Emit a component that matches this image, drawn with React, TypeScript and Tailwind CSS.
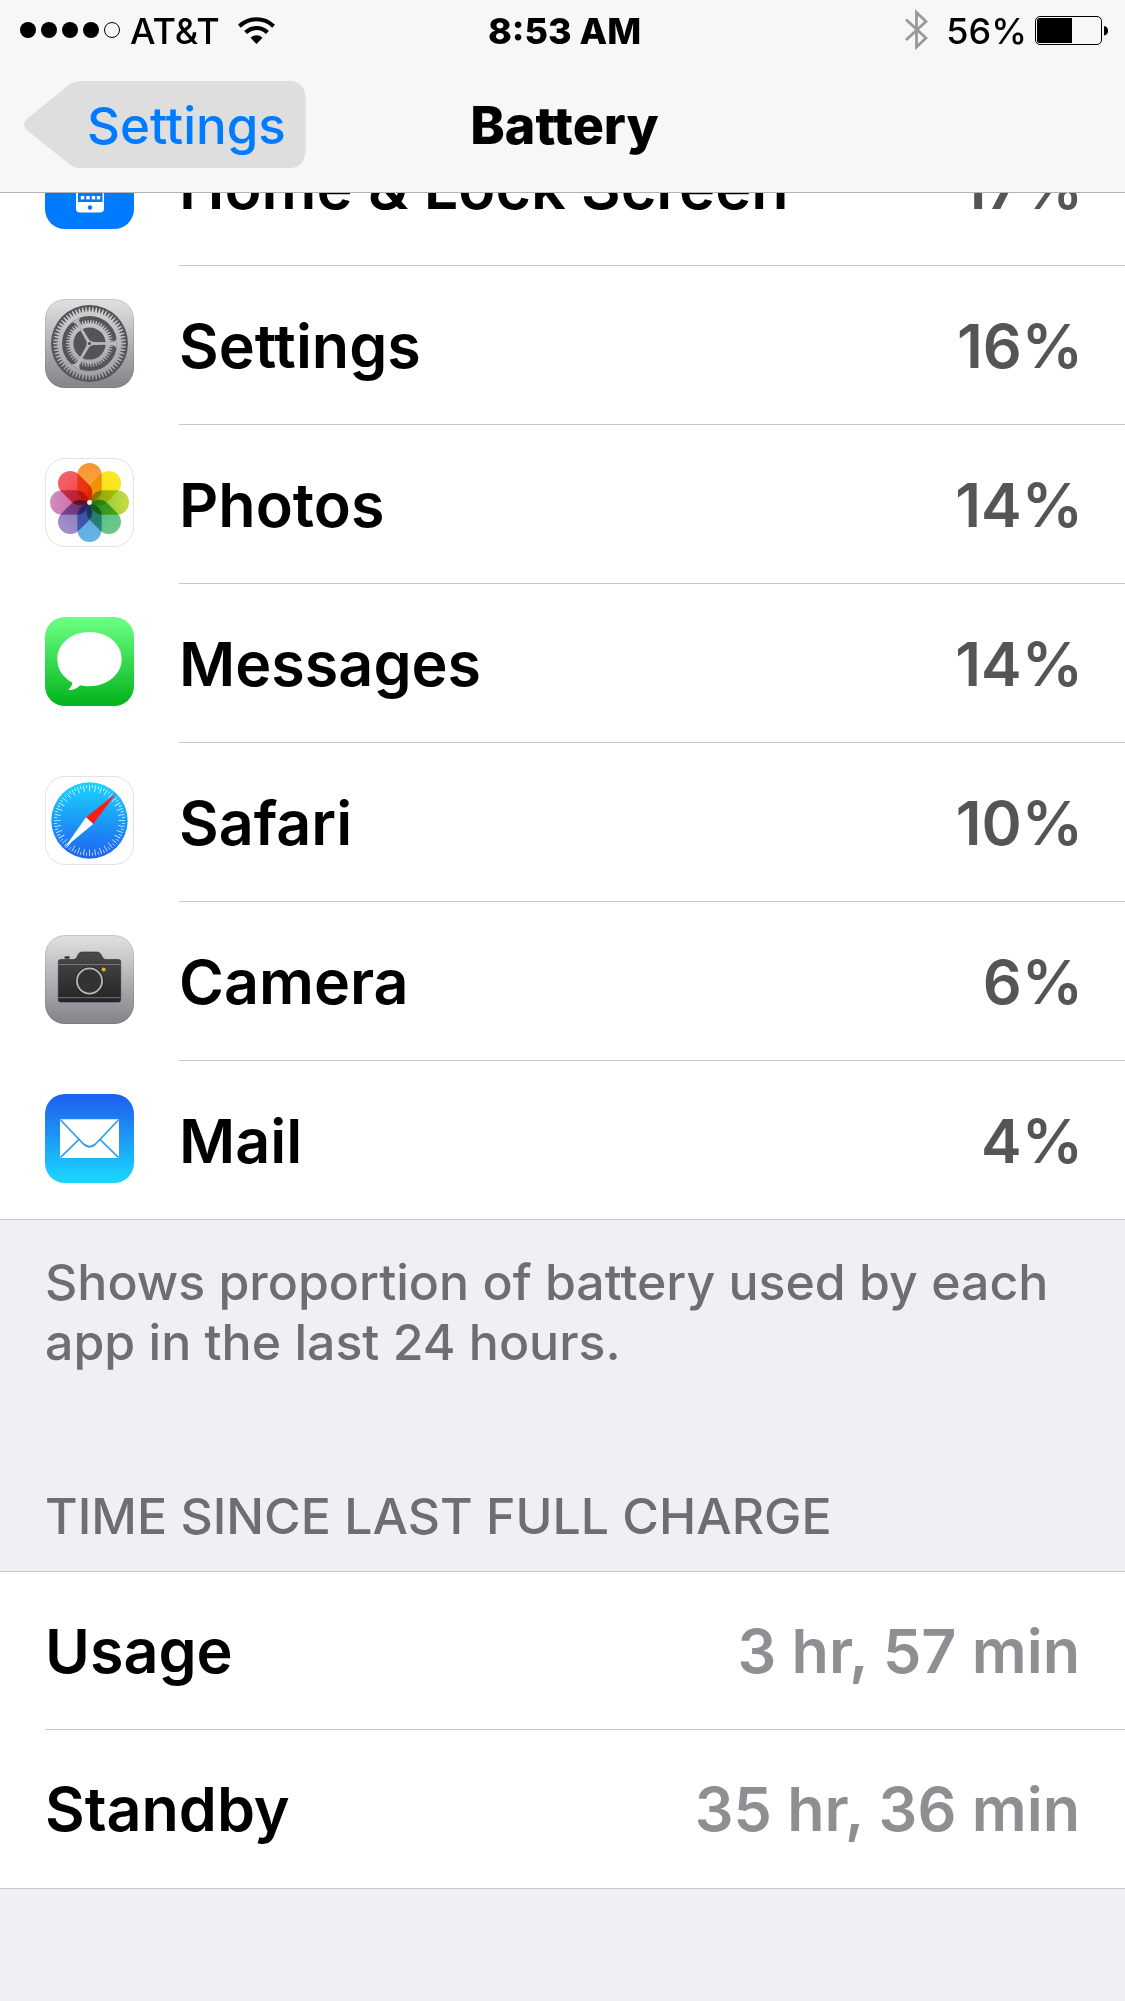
import type { ReactNode } from "react";

const ICON = "block h-[89px] w-[89px] shrink-0";

function Tile({ id, from, to, edge, children }: { id: string; from: string; to: string; edge?: string; children: ReactNode }) {
  return (
    <svg viewBox="0 0 89 89" className={ICON} aria-hidden="true">
      <defs>
        <linearGradient id={id} x1="0" y1="0" x2="0" y2="1">
          <stop offset="0.05" stopColor={from} />
          <stop offset="0.95" stopColor={to} />
        </linearGradient>
      </defs>
      <rect width="89" height="89" rx="20" fill={`url(#${id})`} />
      {edge && <rect x="0.5" y="0.5" width="88" height="88" rx="19.5" fill="none" stroke={edge} />}
      {children}
    </svg>
  );
}

function HomeIcon() {
  return (
    <Tile id="home-bg" from="#007aff" to="#007aff">
      <rect x="31" y="16" width="28" height="56.5" rx="4" fill="#fff" />
      <rect x="33" y="24" width="24.5" height="38" fill="#007aff" />
      {[30, 38, 46, 56].map((y) =>
        [36, 41.5, 47, 52].map((x) => <rect key={`${x}-${y}`} x={x - 0.2} y={y} width="3.4" height="3.4" fill="#fff" />)
      )}
      <circle cx="45" cy="67.5" r="2.2" fill="#007aff" />
    </Tile>
  );
}

function polar(radius: number, degrees: number) {
  const a = (degrees * Math.PI) / 180;
  return `${(44.5 + radius * Math.cos(a)).toFixed(2)} ${(44.5 + radius * Math.sin(a)).toFixed(2)}`;
}

function teeth(count: number, base: number, tip: number) {
  const step = 360 / count;
  return Array.from({ length: count }, (_, i) => {
    const a = i * step;
    return `M${polar(base, a - step * 0.42)}L${polar(tip, a - step * 0.14)} ${polar(tip, a + step * 0.14)} ${polar(base, a + step * 0.42)}Z`;
  }).join("");
}

const OUTER_TEETH = teeth(64, 31.3, 36.5);
const INNER_TEETH = teeth(50, 19.5, 23.6);

function SettingsIcon() {
  return (
    <Tile id="settings-bg" from="#dcddde" to="#86888e" edge="#00000018">
      <defs>
        <linearGradient id="gear-metal" gradientUnits="userSpaceOnUse" x1="0" y1="6" x2="0" y2="83">
          <stop offset="0" stopColor="#d3d4d6" />
          <stop offset="1" stopColor="#9b9da1" />
        </linearGradient>
      </defs>
      <circle cx="44.5" cy="44.5" r="38.5" fill="#555557" />
      <path d={OUTER_TEETH} fill="url(#gear-metal)" />
      <path d={INNER_TEETH} fill="url(#gear-metal)" />
      <g fill="none" stroke="url(#gear-metal)">
        <circle cx="44.5" cy="44.5" r="29.6" strokeWidth="4.2" />
        <circle cx="44.5" cy="44.5" r="18" strokeWidth="3.8" />
      </g>
      {[0, 120, 240].map((a) => (
        <path
          key={a}
          d="M44.5 42 48.500 43 62 43.200 67.500 42.800Q70.500 42 71.800 39.500V49.500Q70.500 47 67.500 46.200L62 45.800 48.500 46 44.500 47Z"
          fill="#b8b9bc"
          transform={`rotate(${a} 44.5 44.5)`}
        />
      ))}
      <circle cx="44.5" cy="44.5" r="2.8" fill="#b8b9bc" />
      <circle cx="44.5" cy="44.5" r="1.5" fill="#444446" />
    </Tile>
  );
}

const PETALS = [
  ["#f7923a", "#fcb52c"],
  ["#fbe920", "#f0dc1e"],
  ["#c6dc42", "#86bf3c"],
  ["#70c88c", "#4fb97f"],
  ["#62b6ea", "#6ba0d6"],
  ["#a48fcb", "#8376ba"],
  ["#d38bc0", "#c6679c"],
  ["#f3646c", "#ee3f3c"],
];

function PhotosIcon() {
  return (
    <Tile id="photos-bg" from="#ffffff" to="#ffffff" edge="#e2e2e2">
      <g className="isolate">
        {PETALS.map(([outer, inner], i) => (
          <g key={i} transform={`rotate(${i * 45} 44.5 44.5)`} className="mix-blend-multiply">
            <linearGradient id={`petal-${i}`} x1="0" y1="0" x2="0" y2="1">
              <stop offset="0" stopColor={outer} />
              <stop offset="1" stopColor={inner} />
            </linearGradient>
            <rect x="32.3" y="5" width="24.4" height="38.5" rx="12.2" fill={`url(#petal-${i})`} />
          </g>
        ))}
      </g>
      <circle cx="44.5" cy="44.5" r="2.4" fill="#fff" />
    </Tile>
  );
}

function MessagesIcon() {
  return (
    <Tile id="messages-bg" from="#68fd80" to="#07b71f">
      <path
        d="M44.5 15C62.500 15 76.700 26.800 76.700 42S62.500 69.200 44.500 69.200C41.300 69.200 38.500 69 35.500 68.200 32.500 71 27.500 73.500 23.300 73 25.500 71 27.200 68.500 27.400 65.600 18.200 60.800 12.300 52.500 12.300 42 12.300 26.800 26.500 15 44.500 15Z"
        fill="#fff"
      />
    </Tile>
  );
}

function SafariIcon() {
  return (
    <Tile id="safari-bg" from="#ffffff" to="#ffffff" edge="#e2e2e2">
      <defs>
        <linearGradient id="safari-dial" x1="0" y1="0" x2="0" y2="1">
          <stop offset="0" stopColor="#1bd3fd" />
          <stop offset="1" stopColor="#1d62f0" />
        </linearGradient>
      </defs>
      <circle cx="44.5" cy="44.5" r="38.2" fill="url(#safari-dial)" />
      {Array.from({ length: 72 }, (_, i) => (
        <line
          key={i}
          x1="44.5"
          x2="44.5"
          y1="9"
          y2={i % 2 ? 12 : 15.5}
          stroke="#fff"
          strokeOpacity="0.75"
          strokeWidth="0.9"
          transform={`rotate(${i * 5} 44.5 44.5)`}
        />
      ))}
      <path d="M71.300 17.300 41 41.200 48.200 48Z" fill="#fe1b17" />
      <path d="M19.300 72 41 41.200 48.200 48Z" fill="#fff" />
    </Tile>
  );
}

function CameraIcon() {
  return (
    <Tile id="camera-bg" from="#dcddde" to="#86888e" edge="#00000018">
      <defs>
        <linearGradient id="camera-body" x1="0" y1="0" x2="0" y2="1">
          <stop offset="0" stopColor="#4a4a4a" />
          <stop offset="1" stopColor="#242424" />
        </linearGradient>
      </defs>
      <rect x="19.500" y="21.300" width="5.200" height="2.500" rx="1" fill="#333" />
      <path
        d="M15.500 24.500H28C34 24.500 31 17 37.500 17H51.500C58 17 55.500 24.500 61.500 24.500H73.500Q75.700 24.500 75.700 26.700V65Q75.700 67 73.700 67H15.300Q13.300 67 13.300 65V26.700Q13.300 24.500 15.500 24.500Z"
        fill="url(#camera-body)"
        stroke="#2a2a2a"
        strokeWidth="0.600"
      />
      <path d="M13.300 29.500H75.700M13.300 62.700H75.700" stroke="#858585" strokeWidth="0.800" />
      <circle cx="44.500" cy="46" r="14.500" fill="#252525" />
      <circle cx="44.500" cy="46" r="12.600" fill="#333" stroke="#b9babd" strokeWidth="1.800" />
      <circle cx="58.700" cy="34.500" r="1.900" fill="#f3b21c" />
    </Tile>
  );
}

function MailIcon() {
  return (
    <Tile id="mail-bg" from="#1d62f0" to="#1bd3fd">
      <rect x="15" y="25.300" width="59" height="38.700" rx="1" fill="#fff" />
      <g fill="none" stroke="#2a9df8" strokeWidth="1.700">
        <path d="M15.500 26 38.500 50Q44.500 55.500 50.500 50L73.500 26" />
        <path d="M15.500 63.500 34 45.300M73.500 63.500 55 45.300" />
      </g>
    </Tile>
  );
}

const APPS = [
  { name: "Home & Lock Screen", value: "17%", Icon: HomeIcon },
  { name: "Settings", value: "16%", Icon: SettingsIcon },
  { name: "Photos", value: "14%", Icon: PhotosIcon },
  { name: "Messages", value: "14%", Icon: MessagesIcon },
  { name: "Safari", value: "10%", Icon: SafariIcon },
  { name: "Camera", value: "6%", Icon: CameraIcon },
  { name: "Mail", value: "4%", Icon: MailIcon },
];

const TIMES = [
  { name: "Usage", value: "3 hr, 57 min" },
  { name: "Standby", value: "35 hr, 36 min" },
];

function StatusBar() {
  return (
    <div className="grid h-[60px] grid-cols-3 items-center pr-[16px] pl-[20px] text-[36px] leading-[42px]">
      <div className="flex items-center">
        <svg viewBox="0 0 100 16" className="h-[16px] w-[100px]" role="img" aria-label="Signal strength">
          {[8, 29, 50, 71].map((x) => (
            <circle key={x} cx={x} cy="8" r="8" />
          ))}
          <circle cx="92" cy="8" r="7.500" fill="none" stroke="#000" />
        </svg>
        <span className="ml-[10px] pt-[2px] font-medium">AT&amp;T</span>
        <svg viewBox="0 0 37 27" className="ml-[18px] h-[27px] w-[37px]" role="img" aria-label="Wi-Fi">
          <g fill="none" stroke="#000" strokeWidth="4.200">
            <path d="M1.400 9.200A24.500 24.500 0 0 1 35.600 9.200" />
            <path d="M7.600 15.500A15.500 15.500 0 0 1 29.400 15.500" />
          </g>
          <path d="M18.500 27 12.500 20.800A8.500 8.500 0 0 1 24.500 20.800Z" />
        </svg>
      </div>
      <div className="pt-[2px] text-center font-extrabold">8:53 AM</div>
      <div className="flex items-center justify-end">
        <svg viewBox="0 0 23 42" className="h-[42px] w-[23px]" role="img" aria-label="Bluetooth">
          <path d="M1 10.500 21 29 11.500 38V3.500L21 12.500 1 31" fill="none" stroke="#999" strokeWidth="2.800" />
        </svg>
        <span className="ml-[18px] pt-[2px] font-medium">56%</span>
        <svg viewBox="0 0 74 29" className="ml-[8px] h-[29px] w-[74px]" role="img" aria-label="Battery level">
          <rect x="0.500" y="0.500" width="66" height="28" rx="4.500" fill="none" stroke="#000" />
          <path d="M4.500 2H37V27H4.500Q2 27 2 24.500V4.500Q2 2 4.500 2Z" />
          <path d="M69 10Q73 10.500 73 14.800T69 19.500Z" />
        </svg>
      </div>
    </div>
  );
}

export default function App() {
  return (
    <div className="flex min-h-screen flex-col bg-[#efeff4] font-['Inter',sans-serif] text-black">
      <header className="border-b border-[#b2b2b2] bg-[#f7f7f7]">
        <StatusBar />
        <div className="grid h-[132px] grid-cols-[1fr_auto_1fr] items-center pr-[20px] pb-[3px] pl-[24px]">
          <button type="button" className="relative isolate flex h-[87px] w-fit items-center pt-[2px] pr-[20px] pl-[63px] text-[51px] leading-[60px] font-medium text-[#007aff]">
            <svg viewBox="0 0 282 87" preserveAspectRatio="none" className="absolute inset-0 -z-10 h-full w-full" aria-hidden="true">
              <path
                d="M56 0H267C275 0 282 6 282 20V67C282 81 275 87 267 87H56Q50 87 45 83L4 50Q-4 43.500 4 37L45 4Q50 0 56 0Z"
                fill="#dedede"
              />
            </svg>
            Settings
          </button>
          <h1 className="pt-[2px] text-[52px] leading-[60px] font-extrabold">Battery</h1>
        </div>
      </header>

      <main className="overflow-hidden">
        <ul className="-mt-[86px] border-b border-[#c8c7cc] bg-white">
          {APPS.map(({ name, value, Icon }, i) => (
            <li key={name} className="flex h-[159px] pl-[45px] last:h-[158px]">
              <div className="pt-[33px] pr-[45px]">
                <Icon />
              </div>
              <div
                className={
                  i < APPS.length - 1
                    ? "flex flex-1 items-center justify-between border-b border-[#c8c7cc] pt-[2px] pr-[42px] text-[61px] leading-[76px] font-semibold"
                    : "flex flex-1 items-center justify-between pt-[2px] pr-[42px] text-[61px] leading-[76px] font-semibold"
                }
              >
                <span>{name}</span>
                <span className="text-[#555]">{value}</span>
              </div>
            </li>
          ))}
        </ul>

        <p className="px-[45px] pt-[32px] text-[50px] leading-[60px] font-medium text-[#6d6d72]">
          Shows proportion of battery used by each app in the last 24 hours.
        </p>

        <section>
          <h2 className="px-[45px] pt-[114px] pb-[25px] text-[50px] leading-[60px] font-medium text-[#6d6d72]">
            TIME SINCE LAST FULL CHARGE
          </h2>
          <dl className="border-y border-[#c8c7cc] bg-white pl-[45px] text-[61px] leading-[76px] font-semibold">
            {TIMES.map(({ name, value }) => (
              <div key={name} className="flex h-[158px] items-center justify-between border-b border-[#c8c7cc] pr-[45px] last:border-b-0">
                <dt>{name}</dt>
                <dd className="text-[#8e8e93]">{value}</dd>
              </div>
            ))}
          </dl>
        </section>
      </main>
    </div>
  );
}
